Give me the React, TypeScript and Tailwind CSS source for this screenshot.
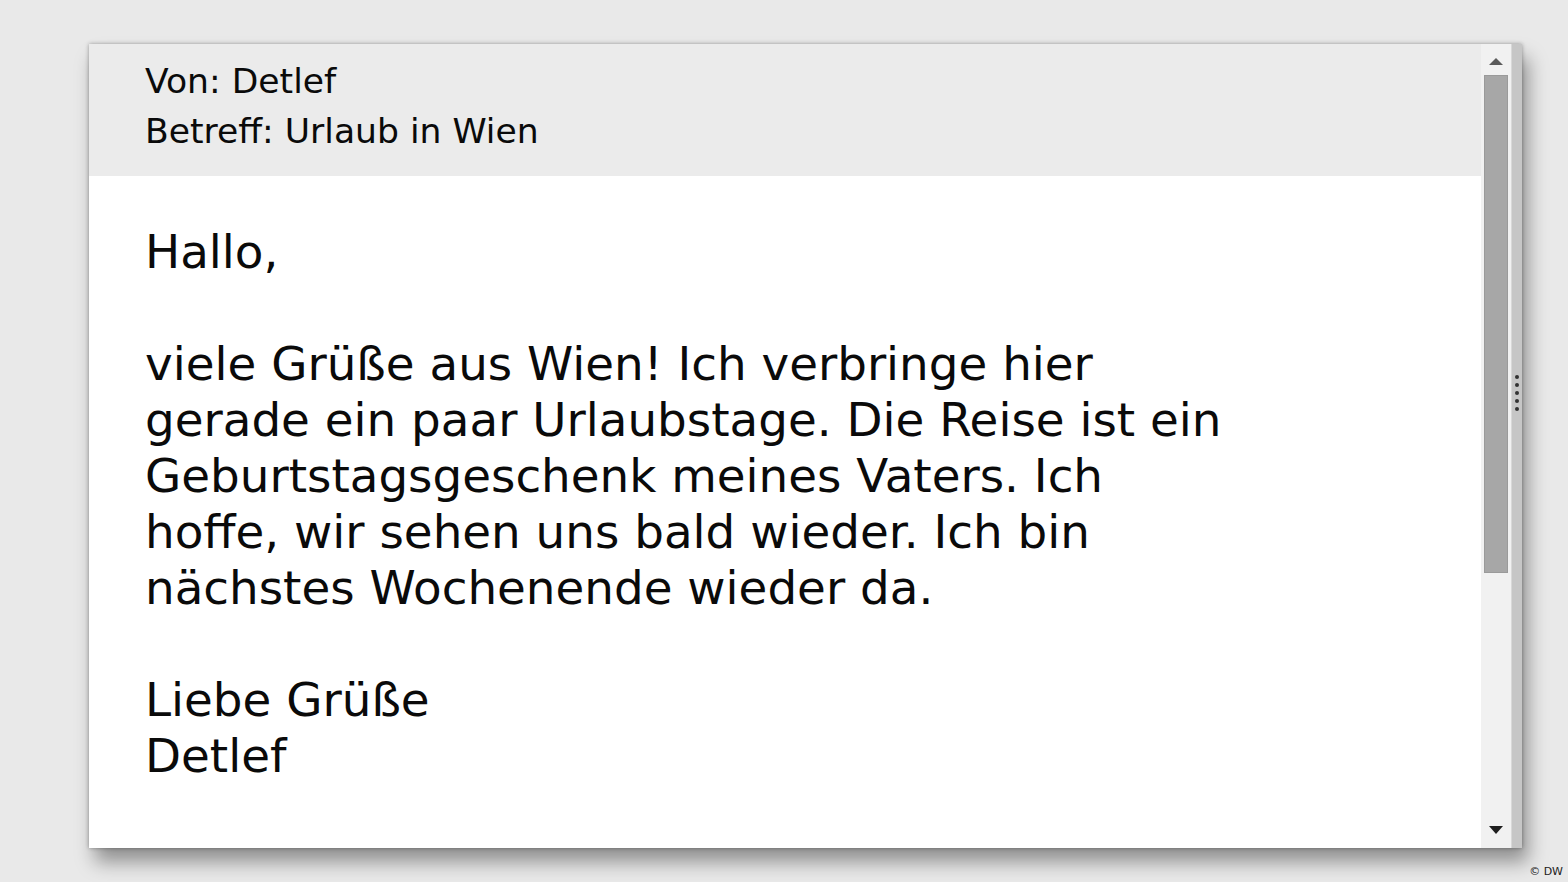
// App.tsx — mail window with a scrollbar
const body = [
  'viele Grüße aus Wien! Ich verbringe hier',
  'gerade ein paar Urlaubstage. Die Reise ist ein',
  'Geburtstagsgeschenk meines Vaters. Ich',
  'hoffe, wir sehen uns bald wieder. Ich bin',
  'nächstes Wochenende wieder da.',
]

function Scrollbar() {
  return (
    <div className="w-[30px] shrink-0 flex flex-col items-center bg-[#f1f1f1]">
      {/* Up arrow */}
      <div className="h-[31px] flex items-center justify-center pt-[3px]">
        <div className="w-0 h-0 border-l-[7px] border-r-[7px] border-b-[7px] border-l-transparent border-r-transparent border-b-[#5a5a5a]" />
      </div>
      {/* Thumb */}
      <div className="w-[24px] h-[498px] bg-[#a7a7a7] border border-[#9a9a9a]" />
      <div className="flex-1" />
      {/* Down arrow */}
      <div className="h-[30px] flex items-start justify-center pt-[8px]">
        <div className="w-0 h-0 border-l-[7px] border-r-[7px] border-t-[8px] border-l-transparent border-r-transparent border-t-[#1e1e1e]" />
      </div>
    </div>
  )
}

export default function App() {
  return (
    <div
      className="relative w-[1568px] h-[882px] overflow-hidden bg-[#e9e9e9] pl-[89px] pt-[44px]"
      style={{ fontFamily: '"DejaVu Sans", Verdana, sans-serif' }}
    >
      <div className="flex w-[1433px] h-[804px] bg-white shadow-[0_0_4px_rgba(0,0,0,0.35),6px_14px_18px_rgba(0,0,0,0.38)]">
        {/* Message */}
        <div className="flex-1 flex flex-col min-w-0">
          <div className="h-[132px] shrink-0 bg-[#ebebeb] pl-[56px] pt-[12px] text-[34.6px] leading-[50px] text-[#0a0a0a]">
            <div>Von: Detlef</div>
            <div>Betreff: Urlaub in Wien</div>
          </div>
          <div className="pl-[56px] pt-[48px] text-[46.8px] leading-[56px] text-[#0a0a0a]">
            <div>Hallo,</div>
            <div className="h-[56px]" />
            {body.map((l) => (
              <div key={l} className="whitespace-nowrap">{l}</div>
            ))}
            <div className="h-[56px]" />
            <div>Liebe Grüße</div>
            <div>Detlef</div>
          </div>
        </div>

        <Scrollbar />

        {/* Resize strip */}
        <div className="w-[11px] shrink-0 bg-[#c6c6c6] border-l border-[#d8d8d8] flex flex-col items-center pt-[331px] gap-[4px]">
          {[0, 1, 2, 3, 4].map((i) => (
            <div key={i} className="w-[4px] h-[4px] rounded-full bg-[#333]" />
          ))}
        </div>
      </div>

      <div className="absolute right-[5px] bottom-[2px] text-[11px] text-[#222]">© DW</div>
    </div>
  )
}
